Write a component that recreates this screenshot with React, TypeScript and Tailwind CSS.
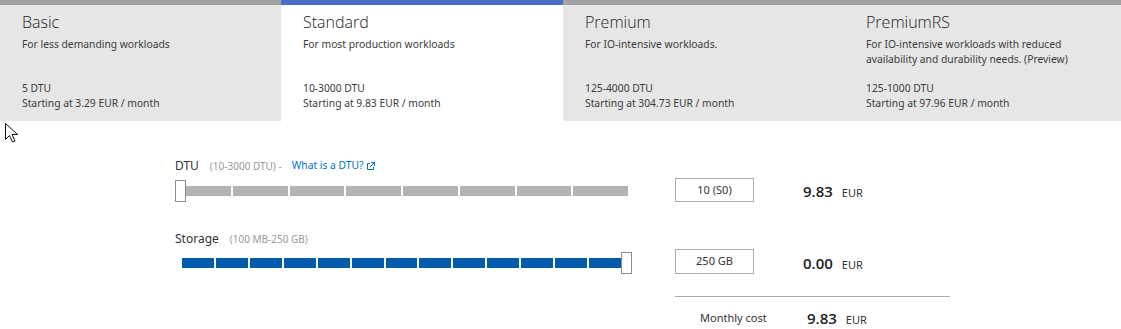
import React from 'react';

const font = { fontFamily: '"Noto Sans", "Open Sans", sans-serif' };

interface Tier {
  name: string;
  description: string;
  dtu: string;
  price: string;
  selected?: boolean;
}

const tiers: Tier[] = [
  { name: 'Basic', description: 'For less demanding workloads', dtu: '5 DTU', price: 'Starting at 3.29 EUR / month' },
  { name: 'Standard', description: 'For most production workloads', dtu: '10-3000 DTU', price: 'Starting at 9.83 EUR / month', selected: true },
  { name: 'Premium', description: 'For IO-intensive workloads.', dtu: '125-4000 DTU', price: 'Starting at 304.73 EUR / month' },
  {
    name: 'PremiumRS',
    description: 'For IO-intensive workloads with reduced availability and durability needs. (Preview)',
    dtu: '125-1000 DTU',
    price: 'Starting at 97.96 EUR / month',
  },
];

function TierTab({ tier }: { tier: Tier }) {
  return (
    <div
      className={`h-[121px] border-t-[5px] pl-[22px] pr-4 pt-[7px] text-[#3b3b3b] ${
        tier.selected ? 'border-[#4a6cc4] bg-white' : 'border-[#a3a3a3] bg-[#e6e6e6]'
      }`}
    >
      <div className="h-[20px] font-['Open_Sans',sans-serif] text-[16px] font-light leading-[20px] text-[#222]">
        {tier.name}
      </div>
      <div className="mt-[5px] h-[44px] max-w-[230px] text-[10.3px] leading-[15px]">{tier.description}</div>
      <div className="text-[10.3px] leading-[15px]">{tier.dtu}</div>
      <div className="text-[10.3px] leading-[15px]">{tier.price}</div>
    </div>
  );
}

function Segments({ count, color }: { count: number; color: string }) {
  return (
    <div className="flex h-full w-full gap-[2px]">
      {Array.from({ length: count }).map((_, i) => (
        <div key={i} className={`h-full flex-1 ${color}`} />
      ))}
    </div>
  );
}

function Thumb({ className }: { className: string }) {
  return <div className={`absolute top-0 h-[22px] w-[11px] border border-[#8c8c8c] bg-white ${className}`} />;
}

function ExternalIcon() {
  return (
    <svg width="9" height="9" viewBox="0 0 9 9" className="ml-[3px] inline-block" fill="none" stroke="#0072c6" strokeWidth="1">
      <path d="M4 1.5H1.5v6h6V5" />
      <path d="M5 0.5h3.5V4M8.5 0.5 4 5" />
    </svg>
  );
}

function Price({ value }: { value: string }) {
  return (
    <div className="flex items-baseline text-[#222]">
      <span className="font-['Open_Sans',sans-serif] text-[15px] font-semibold">{value}</span>
      <span className="ml-[9px] text-[11px] text-[#333]">EUR</span>
    </div>
  );
}

export default function App() {
  return (
    <div className="relative h-[329px] w-[1121px] overflow-hidden bg-white" style={font}>
      <div className="grid grid-cols-[281px_282px_281px_1fr] bg-white">
        {tiers.map(t => (
          <TierTab key={t.name} tier={t} />
        ))}
      </div>

      {/* mouse cursor */}
      <svg className="absolute left-[5px] top-[123px]" width="13" height="20" viewBox="0 0 13 20">
        <path d="M0.5 0.5v16l4-4 3 6.5 2.5-1-3-6.5h5.5z" fill="white" stroke="#111" strokeWidth="1" />
      </svg>

      <div className="pl-[175px] pt-[38px]">
        {/* DTU row */}
        <div className="flex">
          <div className="w-[456px]">
            <div className="flex h-[14px] items-center">
              <span className="text-[12px] text-[#333]">DTU</span>
              <span className="ml-[11px] text-[10px] text-[#999]">(10-3000 DTU) -</span>
              <span className="ml-[10px] text-[10.3px] text-[#0072c6]">What is a DTU?</span>
              <ExternalIcon />
            </div>
            <div className="relative mt-[7px] h-[22px]">
              <div className="ml-[1px] flex h-[22px] w-[452px] items-center">
                <div className="h-[10px] w-full">
                  <Segments count={8} color="bg-[#b3b3b3]" />
                </div>
              </div>
              <Thumb className="left-0" />
            </div>
          </div>
          <div className="ml-[44px] flex items-end pt-[16px]">
            <div className="flex h-[24px] w-[79px] items-center justify-center border border-[#ababab] text-[11px] text-[#333]">
              10 (S0)
            </div>
            <div className="ml-[49px]">
              <Price value="9.83" />
            </div>
          </div>
        </div>

        {/* Storage row */}
        <div className="mt-[30px] flex">
          <div className="w-[456px]">
            <div className="flex h-[14px] items-center">
              <span className="text-[12px] text-[#333]">Storage</span>
              <span className="ml-[11px] text-[10px] text-[#999]">(100 MB-250 GB)</span>
            </div>
            <div className="relative mt-[6px] h-[22px]">
              <div className="ml-[7px] flex h-[22px] w-[439px] items-center">
                <div className="h-[10px] w-full">
                  <Segments count={13} color="bg-[#005bac]" />
                </div>
              </div>
              <Thumb className="left-[446px]" />
            </div>
          </div>
          <div className="ml-[44px] flex items-end pt-[15px]">
            <div className="flex h-[25px] w-[79px] items-center justify-center border border-[#ababab] text-[11px] text-[#333]">
              250 GB
            </div>
            <div className="ml-[49px]">
              <Price value="0.00" />
            </div>
          </div>
        </div>

        {/* Total */}
        <div className="ml-[500px] mt-[22px] w-[275px] border-t border-[#ababab]">
          <div className="flex h-[42px] items-center pl-[25px]">
            <span className="w-[107px] text-[11px] text-[#333]">Monthly cost</span>
            <Price value="9.83" />
          </div>
        </div>
      </div>
    </div>
  );
}
